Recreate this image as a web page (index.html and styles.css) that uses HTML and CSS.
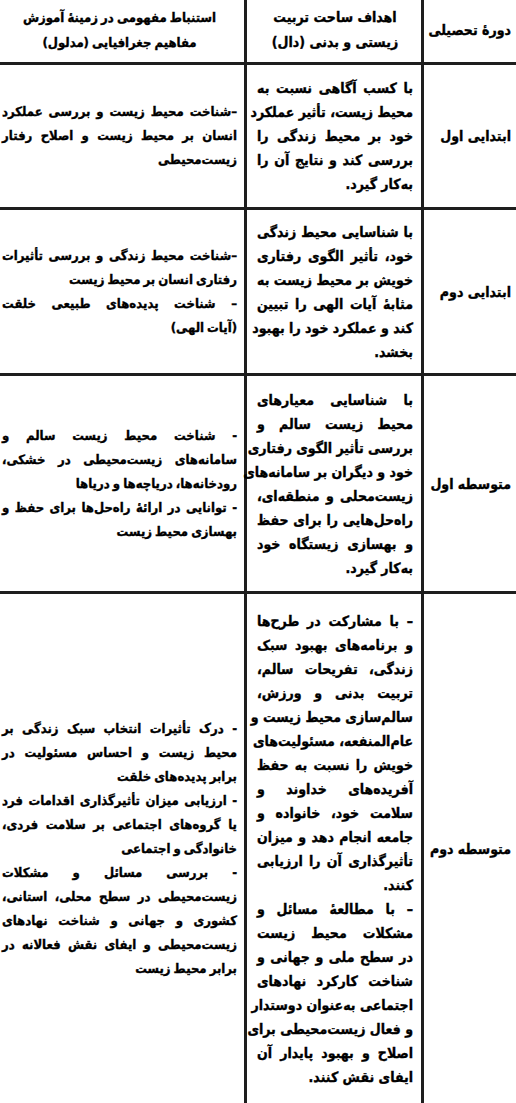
FILE: index.html
```html
<!DOCTYPE html>
<html lang="fa" dir="rtl">
<head>
<meta charset="utf-8">
<title>جدول ساحت تربیت زیستی و بدنی</title>
<link rel="stylesheet" href="styles.css">
</head>
<body>
<div class="grid">
  <div class="cell c-level head"><div class="ln end">دورهٔ تحصیلی</div></div>
  <div class="cell c-goal head center">
    <div class="ln">اهداف ساحت تربیت</div>
    <div class="ln">زیستی و بدنی (دال)</div>
  </div>
  <div class="cell c-concept head center">
    <div class="ln">استنباط مفهومی در زمینهٔ آموزش</div>
    <div class="ln">مفاهیم جغرافیایی (مدلول)</div>
  </div>

  <div class="cell c-level"><div class="ln end">ابتدایی اول</div></div>
  <div class="cell c-goal">
    <div class="ln">با کسب آگاهی نسبت به</div>
    <div class="ln">محیط زیست، تأثیر عملکرد</div>
    <div class="ln">خود بر محیط زندگی را</div>
    <div class="ln">بررسی کند و نتایج آن را</div>
    <div class="ln end">به‌کار گیرد.</div>
  </div>
  <div class="cell c-concept">
    <div class="ln">–شناخت محیط زیست و بررسی عملکرد</div>
    <div class="ln">انسان بر محیط زیست و اصلاح رفتار</div>
    <div class="ln end">زیست‌محیطی</div>
  </div>

  <div class="cell c-level"><div class="ln end">ابتدایی دوم</div></div>
  <div class="cell c-goal">
    <div class="ln">با شناسایی محیط زندگی</div>
    <div class="ln">خود، تأثیر الگوی رفتاری</div>
    <div class="ln">خویش بر محیط زیست به</div>
    <div class="ln">مثابهٔ آیات الهی را تبیین</div>
    <div class="ln">کند و عملکرد خود را بهبود</div>
    <div class="ln end">بخشد.</div>
  </div>
  <div class="cell c-concept">
    <div class="ln">–شناخت محیط زندگی و بررسی تأثیرات</div>
    <div class="ln end">رفتاری انسان بر محیط زیست</div>
    <div class="ln">– شناخت پدیده‌های طبیعی خلقت</div>
    <div class="ln end">(آیات الهی)</div>
  </div>

  <div class="cell c-level"><div class="ln end">متوسطه اول</div></div>
  <div class="cell c-goal">
    <div class="ln">با شناسایی معیارهای</div>
    <div class="ln">محیط زیست سالم و</div>
    <div class="ln">بررسی تأثیر الگوی رفتاری</div>
    <div class="ln">خود و دیگران بر سامانه‌های</div>
    <div class="ln">زیست‌محلی و منطقه‌ای،</div>
    <div class="ln">راه‌حل‌هایی را برای حفظ</div>
    <div class="ln">و بهسازی زیستگاه خود</div>
    <div class="ln end">به‌کار گیرد.</div>
  </div>
  <div class="cell c-concept">
    <div class="ln">- شناخت محیط زیست سالم و</div>
    <div class="ln">سامانه‌های زیست‌محیطی در خشکی،</div>
    <div class="ln end">رودخانه‌ها، دریاچه‌ها و دریاها</div>
    <div class="ln">- توانایی در ارائهٔ راه‌حل‌ها برای حفظ و</div>
    <div class="ln end">بهسازی محیط زیست</div>
  </div>

  <div class="cell c-level last"><div class="ln end">متوسطه دوم</div></div>
  <div class="cell c-goal last">
    <div class="ln">– با مشارکت در طرح‌ها</div>
    <div class="ln">و برنامه‌های بهبود سبک</div>
    <div class="ln">زندگی، تفریحات سالم،</div>
    <div class="ln">تربیت بدنی و ورزش،</div>
    <div class="ln">سالم‌سازی محیط زیست و</div>
    <div class="ln">عام‌المنفعه، مسئولیت‌های</div>
    <div class="ln">خویش را نسبت به حفظ</div>
    <div class="ln">آفریده‌های خداوند و</div>
    <div class="ln">سلامت خود، خانواده و</div>
    <div class="ln">جامعه انجام دهد و میزان</div>
    <div class="ln">تأثیرگذاری آن را ارزیابی</div>
    <div class="ln end">کنند.</div>
    <div class="ln">– با مطالعهٔ مسائل و</div>
    <div class="ln">مشکلات محیط زیست</div>
    <div class="ln">در سطح ملی و جهانی و</div>
    <div class="ln">شناخت کارکرد نهادهای</div>
    <div class="ln">اجتماعی به‌عنوان دوستدار</div>
    <div class="ln">و فعال زیست‌محیطی برای</div>
    <div class="ln">اصلاح و بهبود پایدار آن</div>
    <div class="ln end">ایفای نقش کنند.</div>
  </div>
  <div class="cell c-concept last">
    <div class="ln">- درک تأثیرات انتخاب سبک زندگی بر</div>
    <div class="ln">محیط زیست و احساس مسئولیت در</div>
    <div class="ln end">برابر پدیده‌های خلقت</div>
    <div class="ln">- ارزیابی میزان تأثیرگذاری اقدامات فرد</div>
    <div class="ln">یا گروه‌های اجتماعی بر سلامت فردی،</div>
    <div class="ln end">خانوادگی و اجتماعی</div>
    <div class="ln">- بررسی مسائل و مشکلات</div>
    <div class="ln">زیست‌محیطی در سطح محلی، استانی،</div>
    <div class="ln">کشوری و جهانی و شناخت نهادهای</div>
    <div class="ln">زیست‌محیطی و ایفای نقش فعالانه در</div>
    <div class="ln end">برابر محیط زیست</div>
  </div>
</div>
</body>
</html>
```

FILE: styles.css
```css
* { box-sizing: border-box; }
html, body { margin: 0; padding: 0; background: #fff; }
body {
  font-family: "DejaVu Sans Condensed", "DejaVu Sans", sans-serif;
  font-stretch: condensed;
  font-weight: bold;
  color: #000;
  font-size: 14px;
  -webkit-text-stroke: 0.35px #000;
}
.grid {
  direction: rtl;
  display: grid;
  width: 516px;
  grid-template-columns: 95px 177px 244px;
  grid-template-rows: 65px 145px 166px 218px 509px;
}
.cell {
  border-bottom: 3px solid #1e1e1e;
  display: flex;
  flex-direction: column;
  justify-content: center;
  line-height: 24px;
}
.cell.last { border-bottom: none; }
.c-level { border-left: 3px solid #1e1e1e; padding: 0 5px 0 4px; font-size: 14px; }
.c-goal { border-left: 3px solid #1e1e1e; padding: 0 8px 0 10px; }
.c-concept { padding: 0 7px 0 2px; font-size: 13px; word-spacing: -1px; }
.head { line-height: 25px; padding-bottom: 2px; }
.ln {
  white-space: nowrap;
  text-align: justify;
  text-align-last: justify;
}
.ln.end { text-align: right; text-align-last: right; }
.center .ln { text-align: center; text-align-last: center; }
```
